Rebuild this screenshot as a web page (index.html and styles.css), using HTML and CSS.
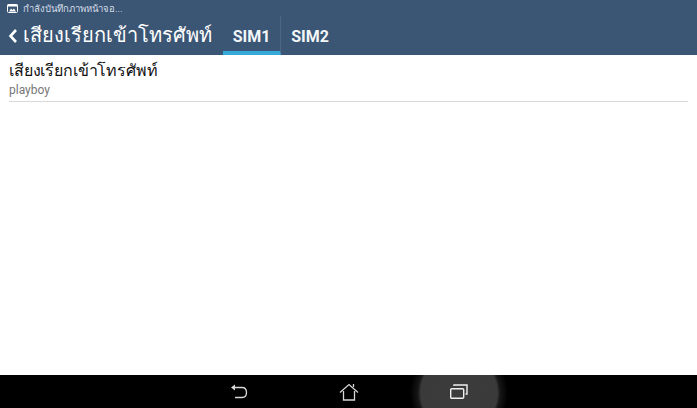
FILE: index.html
```html
<!DOCTYPE html>
<html lang="th">
<head>
    <meta charset="UTF-8">
    <meta name="viewport" content="width=device-width, initial-scale=1.0">
    <title>เสียงเรียกเข้าโทรศัพท์</title>
    <link rel="stylesheet" href="styles.css">
</head>
<body>
    <div class="screen">
        <header class="app-header">
            <div class="status-bar">
                <svg class="status-icon" width="11" height="9" viewBox="0 0 11 9">
                    <rect x="0.5" y="0.5" width="10" height="8" rx="1" fill="none" stroke="#fff"/>
                    <rect x="0.5" y="0.5" width="10" height="2" fill="#fff"/>
                    <path d="M2 7.5 L4 4.5 L5.5 6 L7 4.5 L9 7.5 Z" fill="#fff"/>
                </svg>
                <span class="status-text">กำลังบันทึกภาพหน้าจอ...</span>
            </div>
            <div class="action-bar">
                <svg class="back-chevron" width="10" height="16" viewBox="0 0 10 16">
                    <path d="M8 2 L2.5 8 L8 14" fill="none" stroke="#fff" stroke-width="2.6"/>
                </svg>
                <h1 class="page-title">เสียงเรียกเข้าโทรศัพท์</h1>
                <div class="tabs">
                    <div class="tab tab-active">SIM1</div>
                    <div class="tab">SIM2</div>
                </div>
            </div>
        </header>

        <main class="content">
            <div class="pref-row">
                <div class="pref-title">เสียงเรียกเข้าโทรศัพท์</div>
                <div class="pref-summary">playboy</div>
            </div>
        </main>

        <nav class="nav-bar">
            <div class="nav-btn">
                <svg width="18" height="17" viewBox="0 0 18 17">
                    <path d="M3 4.5 H12 C15 4.5 16.5 6.5 16.5 9.5 C16.5 12.5 15 14.5 12 14.5 H5" fill="none" stroke="#d8d8d8" stroke-width="1.3"/>
                    <path d="M1 4.5 L5 1.5 V7.5 Z" fill="#d8d8d8"/>
                </svg>
            </div>
            <div class="nav-btn">
                <svg width="20" height="18" viewBox="0 0 20 18">
                    <path d="M1 9.5 L10 1.5 L19 9.5" fill="none" stroke="#d8d8d8" stroke-width="1.3"/>
                    <path d="M4.5 8 V17 H15.5 V8" fill="none" stroke="#d8d8d8" stroke-width="1.3"/>
                    <path d="M14.5 1 V4" stroke="#d8d8d8" stroke-width="1.3"/>
                </svg>
            </div>
            <div class="nav-btn nav-btn-pressed">
                <svg width="18" height="15" viewBox="0 0 18 15">
                    <rect x="0.7" y="4.7" width="13" height="9.6" rx="1" fill="none" stroke="#f0f0f0" stroke-width="1.4"/>
                    <path d="M4 2 V1 H17 V10 H15.5" fill="none" stroke="#f0f0f0" stroke-width="1.4"/>
                </svg>
            </div>
        </nav>
    </div>
</body>
</html>
```

FILE: styles.css
```css
html, body {
    margin: 0;
    padding: 0;
}

body {
    font-family: "Roboto", "Noto Sans", "Liberation Sans", sans-serif;
    background-color: #000;
}

.screen {
    width: 697px;
    height: 408px;
    display: flex;
    flex-direction: column;
    overflow: hidden;
}

.app-header {
    background-color: #3b5675;
    color: #fff;
    height: 55px;
    flex-shrink: 0;
}

.status-bar {
    height: 16px;
    display: flex;
    align-items: center;
    padding-left: 7px;
    gap: 5px;
}

.status-text {
    font-size: 9.5px;
    color: #d5dde6;
}

.action-bar {
    height: 39px;
    display: flex;
    align-items: stretch;
    padding-left: 8px;
}

.back-chevron {
    align-self: center;
    margin-right: 5px;
}

.page-title {
    margin: 0;
    font-size: 20px;
    font-weight: 400;
    line-height: 38px;
    width: 200px;
    white-space: nowrap;
}

.tabs {
    display: flex;
}

.tab {
    width: 58px;
    font-size: 16px;
    font-weight: 700;
    text-align: center;
    line-height: 42px;
    box-sizing: border-box;
    color: #f2f5f8;
}

.tab-active {
    border-bottom: 4px solid #35a9d8;
    border-right: 1px solid #4d6684;
}

.content {
    flex: 1;
    background-color: #fff;
    padding: 5px 9px 0;
}

.pref-row {
    height: 41px;
    border-bottom: 1px solid #d9d9d9;
}

.pref-title {
    font-size: 16px;
    font-weight: 500;
    letter-spacing: -0.15px;
    line-height: 22px;
    color: #111;
    white-space: nowrap;
}

.pref-summary {
    font-size: 12px;
    line-height: 16px;
    color: #777;
}

.nav-bar {
    height: 33px;
    flex-shrink: 0;
    background-color: #000;
    display: flex;
    justify-content: center;
    gap: 50px;
    overflow: hidden;
}

.nav-btn {
    width: 60px;
    display: flex;
    align-items: center;
    justify-content: center;
    position: relative;
}

.nav-btn-pressed::before {
    content: "";
    position: absolute;
    left: -19px;
    top: -31px;
    width: 98px;
    height: 98px;
    border-radius: 50%;
    background: radial-gradient(closest-side, #3c3c3c 0, #3a3a3a 78%, #161616 84%, #000 100%);
}

.nav-btn svg {
    position: relative;
}
```
